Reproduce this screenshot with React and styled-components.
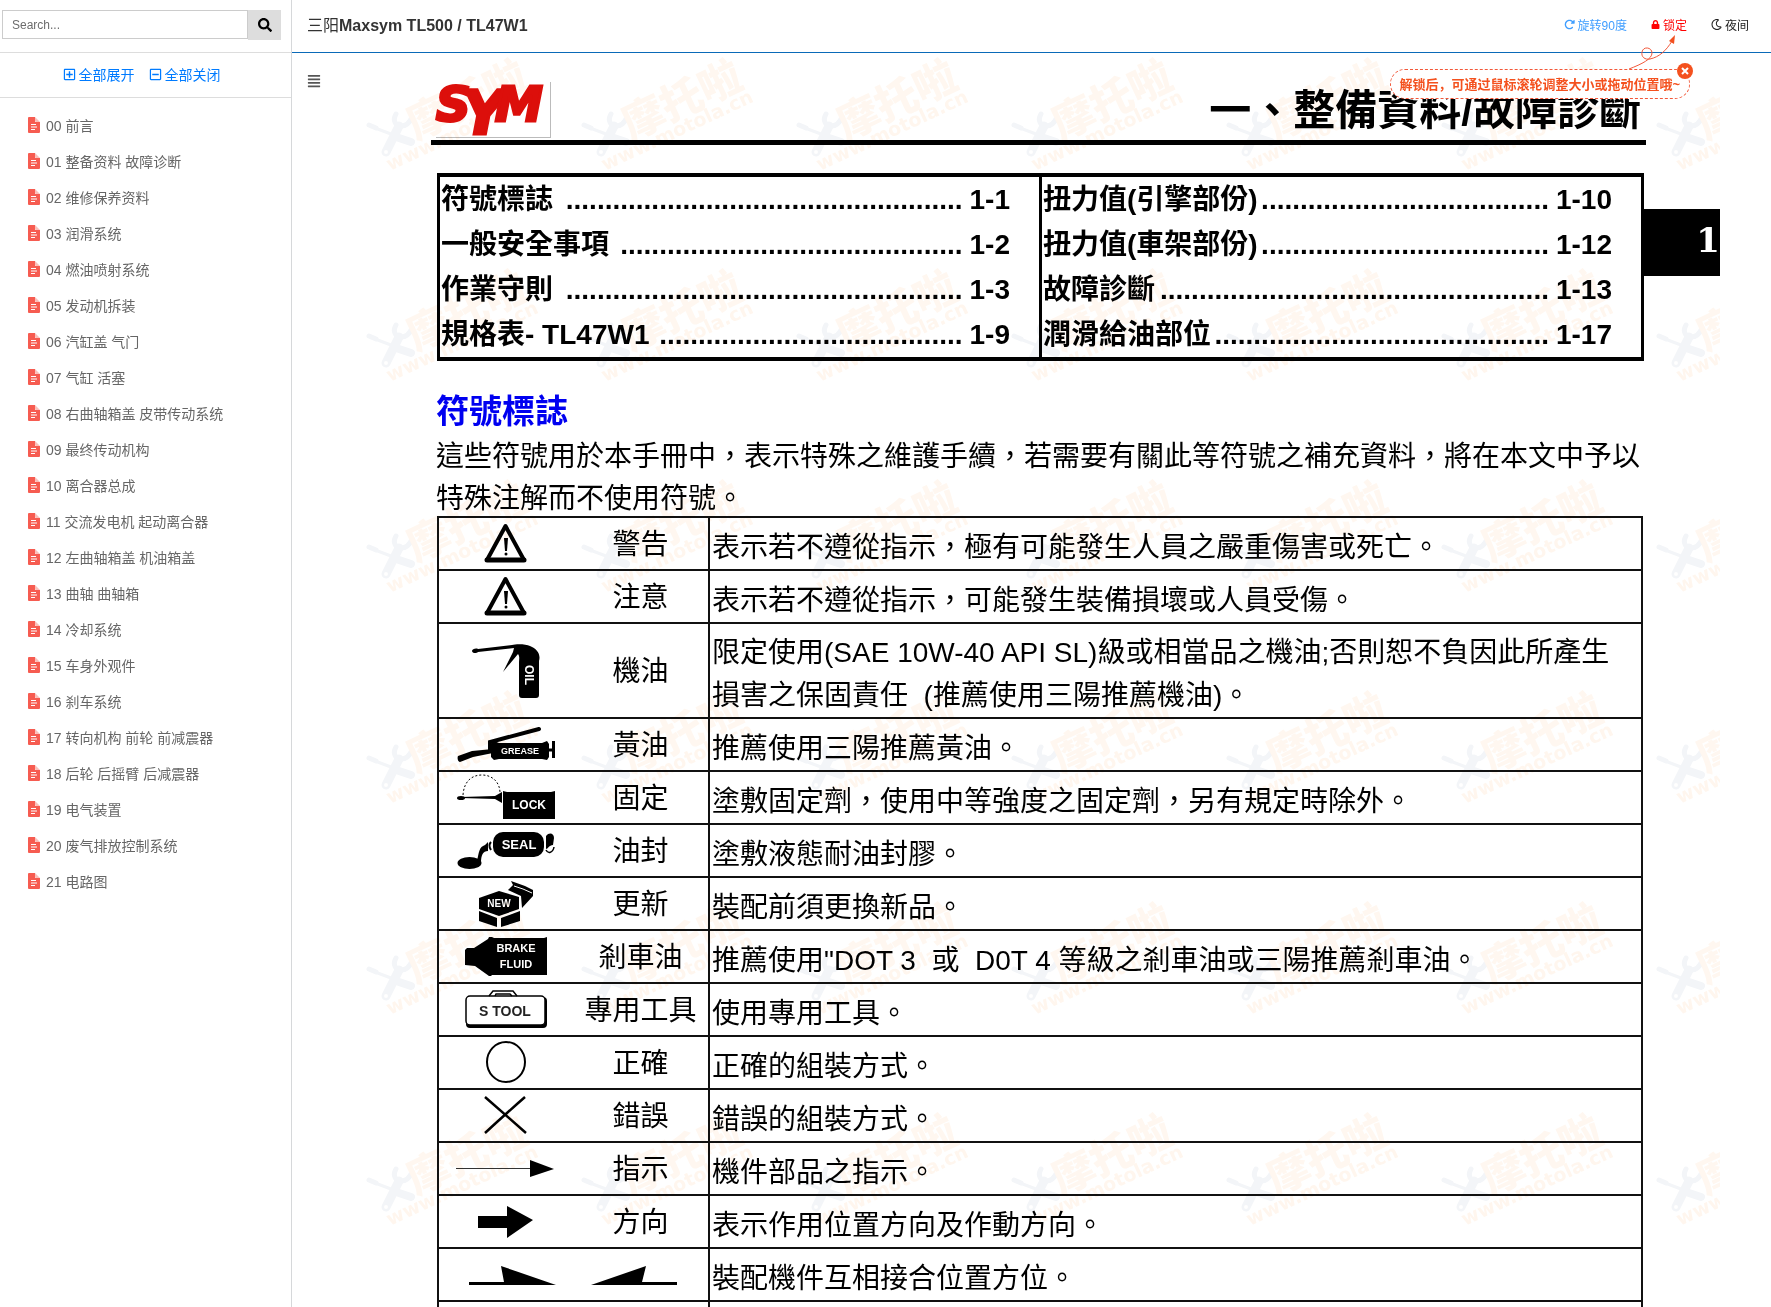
import { useState } from "react";
import styled, { createGlobalStyle } from "styled-components";
import {
  FaSearch,
  FaRegPlusSquare,
  FaRegMinusSquare,
  FaLock,
  FaRegMoon,
  FaAlignJustify,
} from "react-icons/fa";
import { FaRotateRight } from "react-icons/fa6";

const chapters = [
  "00 前言",
  "01 整备资料 故障诊断",
  "02 维修保养资料",
  "03 润滑系统",
  "04 燃油喷射系统",
  "05 发动机拆装",
  "06 汽缸盖 气门",
  "07 气缸 活塞",
  "08 右曲轴箱盖 皮带传动系统",
  "09 最终传动机构",
  "10 离合器总成",
  "11 交流发电机 起动离合器",
  "12 左曲轴箱盖 机油箱盖",
  "13 曲轴 曲轴箱",
  "14 冷却系统",
  "15 车身外观件",
  "16 刹车系统",
  "17 转向机构 前轮 前减震器",
  "18 后轮 后摇臂 后减震器",
  "19 电气装置",
  "20 废气排放控制系统",
  "21 电路图",
];

const tocLeft = [
  { label: "符號標誌", dots: 51, page: "1-1" },
  { label: "一般安全事項", dots: 44, page: "1-2" },
  { label: "作業守則", dots: 51, page: "1-3" },
  { label: "規格表- TL47W1", dots: 39, page: "1-9" },
];

const tocRight = [
  { label: "扭力值(引擎部份)", dots: 37, page: "1-10" },
  { label: "扭力值(車架部份)", dots: 37, page: "1-12" },
  { label: "故障診斷", dots: 50, page: "1-13" },
  { label: "潤滑給油部位", dots: 43, page: "1-17" },
];

const FileIcon = () => (
  <svg width="12" height="16" viewBox="0 0 12 16" aria-hidden="true">
    <path d="M1 0h6v5h5v10a1 1 0 0 1-1 1H1a1 1 0 0 1-1-1V1a1 1 0 0 1 1-1z" fill="#f65c51" />
    <path d="M7 0l5 5H8a1 1 0 0 1-1-1z" fill="#fac0bb" />
    <path d="M3 7.500h5M3 10h6M3 12.500h4" stroke="#fff" strokeWidth="1" />
  </svg>
);

const SymLogo = () => (
  <LogoSvg width="112" height="54" viewBox="0 0 112 54" role="img" aria-label="SYM">
    <text
      fill="#dc0f0b"
      stroke="#dc0f0b"
      strokeWidth="3"
      fontFamily="DejaVu Sans, sans-serif"
      fontWeight="700"
      fontStyle="italic"
      fontSize="48"
    >
      <tspan x="0" y="39">S</tspan>
      <tspan x="26" y="52" fontSize="60">Y</tspan>
      <tspan x="59" y="39">M</tspan>
    </text>
  </LogoSvg>
);

const Warning = () => (
  <Drawing viewBox="0 0 104 51">
    <path d="M52.500 8L71 42H34z" fill="none" stroke="#000" strokeWidth="4" strokeLinejoin="round" />
    <path d="M34 42h37" stroke="#000" strokeWidth="5" strokeLinecap="round" />
    <path d="M51 20h4l-1 13h-2z" />
    <circle cx="53" cy="36" r="1.500" />
  </Drawing>
);

const Oil = () => (
  <Drawing $tall viewBox="0 0 104 93">
    <path d="M66 38c0-3 1-5-1-8L50 48l10-20 1-4-36 4c-2 2-6 1-6-1s4-3 6-2l34-4c4-1 14-1 18 1 7 3 11 8 9 15v34c0 2-1 3-3 3H69c-2 0-3-1-3-3z" />
    <text x="41" y="-72" transform="rotate(90)" fontSize="12">OIL</text>
  </Drawing>
);

const Grease = () => (
  <Drawing viewBox="0 0 104 51">
    <path d="M37 32v-9L86 10" fill="none" stroke="#000" strokeWidth="4" strokeLinecap="round" />
    <path d="M5 37l14-5 21-2v4l-20 4-13 5c-2 0-3-4-2-6z" />
    <path d="M38 25l3-3 5 2h43l5-2 2 3v13l-2 3-5-1H46l-5 1-3-3z" />
    <path d="M95 31h5M100.500 22v17" stroke="#000" strokeWidth="3" />
    <text x="67" y="35" fontSize="9" textAnchor="middle">GREASE</text>
  </Drawing>
);

const Lock = () => (
  <Drawing viewBox="0 0 104 51">
    <path d="M10 23C11 9 19 3 29 3s18 7 18 18" fill="none" stroke="#000" strokeDasharray="2 2" />
    <ellipse cx="8" cy="26" rx="4" ry="2" />
    <path d="M8 25l34-1 7-4v11l-7-4-34-1z" />
    <path d="M50 19l4 1h44l4-1v28H50z" />
    <text x="76" y="37" fontSize="12" textAnchor="middle">LOCK</text>
  </Drawing>
);

const Seal = () => (
  <Drawing viewBox="0 0 104 51">
    <ellipse cx="16.500" cy="38" rx="12" ry="6" />
    <path d="M24 36c2-9 2-14 8-16l3-3v9c-5 0-7 4-7 12z" />
    <path d="M38 17c-2 2-2 5 0 8" fill="none" stroke="#000" strokeWidth="2" />
    <rect x="40" y="7" width="51" height="25" rx="10" />
    <path d="M93 11c3-4 8-3 8 2l-1 7c-4 0-5 4-7 4z" />
    <path d="M93 25c2 4 7 3 8-3" fill="none" stroke="#000" strokeWidth="1.500" />
    <text x="66" y="24" fontSize="13" textAnchor="middle">SEAL</text>
  </Drawing>
);

const Renew = () => (
  <Drawing viewBox="0 0 104 51">
    <path d="M26 20l20-7 20 6v12l-20 7-20-7z" />
    <path d="M26 33l18 7v9l-18-6zM48 40l19-7v10l-19 6z" />
    <path d="M55 12l5-5-2-4 14 5 8 4v6L69 30l-1-12z" />
    <path d="M61 8l9 3 9 4" fill="none" stroke="#fff" strokeWidth="1" />
    <text x="46" y="29" fontSize="10" textAnchor="middle">NEW</text>
  </Drawing>
);

const BrakeFluid = () => (
  <Drawing viewBox="0 0 104 51">
    <path d="M12 19l2-2h7l14-9 1-2h3l2 1h50l3-1v38H39l-1 1h-2L22 35l-10-1z" />
    <text x="63" y="21" fontSize="11" textAnchor="middle">BRAKE</text>
    <text x="63" y="37" fontSize="11" textAnchor="middle">FLUID</text>
  </Drawing>
);

const SpecialTool = () => (
  <Drawing viewBox="0 0 104 51">
    <rect x="13" y="13" width="81" height="31" rx="4" />
    <rect x="13" y="12" width="79" height="29" rx="4" fill="#fff" stroke="#000" strokeWidth="1.500" />
    <path d="M36 12l4-5h20l4 5M42 12l1-2h14l2 2" fill="none" stroke="#000" strokeWidth="1.500" />
    <DarkText x="52" y="32" fontSize="14" textAnchor="middle">S TOOL</DarkText>
  </Drawing>
);

const Correct = () => (
  <Drawing viewBox="0 0 104 51">
    <ellipse cx="53" cy="25" rx="19" ry="20" fill="none" stroke="#000" strokeWidth="2" />
  </Drawing>
);

const Wrong = () => (
  <Drawing viewBox="0 0 104 51">
    <path d="M32 7l41 36M72 7C56 21 45 31 32 43" fill="none" stroke="#000" strokeWidth="2.500" />
  </Drawing>
);

const Pointer = () => (
  <Drawing viewBox="0 0 104 51">
    <path d="M3 25.500h76" stroke="#333" />
    <path d="M77 17l24 9-24 8z" />
  </Drawing>
);

const Direction = () => (
  <Drawing viewBox="0 0 104 51">
    <path d="M25 20h29V10l26 14-26 18V32H25z" />
  </Drawing>
);

const Matching = () => (
  <Drawing $wide viewBox="0 0 269 51">
    <path d="M30 33h35l-3-16 55 19H30z" />
    <path d="M238 33h-35l4-16-55 19h86z" />
  </Drawing>
);

const symbols = [
  { icon: <Warning />, name: "警告", text: "表示若不遵從指示，極有可能發生人員之嚴重傷害或死亡。" },
  { icon: <Warning />, name: "注意", text: "表示若不遵從指示，可能發生裝備損壞或人員受傷。" },
  {
    icon: <Oil />,
    name: "機油",
    text: "限定使用(SAE 10W-40 API SL)級或相當品之機油;否則恕不負因此所產生\n損害之保固責任  (推薦使用三陽推薦機油)。",
  },
  { icon: <Grease />, name: "黃油", text: "推薦使用三陽推薦黃油。" },
  { icon: <Lock />, name: "固定", text: "塗敷固定劑，使用中等強度之固定劑，另有規定時除外。" },
  { icon: <Seal />, name: "油封", text: "塗敷液態耐油封膠。" },
  { icon: <Renew />, name: "更新", text: "裝配前須更換新品。" },
  { icon: <BrakeFluid />, name: "剎車油", text: "推薦使用\"DOT 3  或  D0T 4 等級之剎車油或三陽推薦剎車油。" },
  { icon: <SpecialTool />, name: "專用工具", text: "使用專用工具。" },
  { icon: <Correct />, name: "正確", text: "正確的組裝方式。" },
  { icon: <Wrong />, name: "錯誤", text: "錯誤的組裝方式。" },
  { icon: <Pointer />, name: "指示", text: "機件部品之指示。" },
  { icon: <Direction />, name: "方向", text: "表示作用位置方向及作動方向。" },
  { icon: <Matching />, text: "裝配機件互相接合位置方位。" },
];

const Watermark = () => (
  <WatermarkLayer aria-hidden="true">
    <defs>
      <pattern id="watermark" width="215" height="211" patternUnits="userSpaceOnUse">
        <g fill="none" stroke="#f3f5f8" strokeLinecap="round">
          <path d="M38 73L25 99" strokeWidth="9" />
          <path d="M35 61c-4 7 0 12 5 12s9-4 11-9" strokeWidth="5" />
          <path d="M8 72l7 3" strokeWidth="5" />
          <path d="M14 75l16 6" strokeWidth="3" />
          <path d="M38 85l12 4" strokeWidth="8" />
        </g>
        <circle cx="25" cy="99" r="2" fill="#fff" />
        <text
          transform="translate(55 87) rotate(-25)"
          fill="#fff7f0"
          fontFamily="Noto Sans CJK SC, sans-serif"
          fontWeight="900"
          fontSize="42"
        >
          摩托啦
        </text>
        <text
          transform="translate(29 118) rotate(-25)"
          fill="#fff6ee"
          fontFamily="DejaVu Sans, sans-serif"
          fontWeight="700"
          fontSize="19"
        >
          www.motola.cn
        </text>
      </pattern>
    </defs>
    <rect width="100%" height="100%" fill="url(#watermark)" />
  </WatermarkLayer>
);

const TocList = ({ items }) => (
  <TocColumn>
    {items.map(({ label, dots, page }) => (
      <TocRow key={page}>
        <span>{label}</span>
        <TocDots>{".".repeat(dots)}</TocDots>
        <span>{page}</span>
      </TocRow>
    ))}
  </TocColumn>
);

const App = () => {
  const [tipOpen, setTipOpen] = useState(true);

  return (
    <Layout>
      <GlobalStyle />
      <Sidebar>
        <SearchBar onSubmit={(e) => e.preventDefault()}>
          <SearchInput type="text" placeholder="Search..." aria-label="Search" />
          <SearchButton type="submit" aria-label="Search">
            <FaSearch />
          </SearchButton>
        </SearchBar>
        <TreeActions>
          <TreeLink href="#open">
            <FaRegPlusSquare size={13} />
            全部展开
          </TreeLink>
          <TreeLink href="#close">
            <FaRegMinusSquare size={13} />
            全部关闭
          </TreeLink>
        </TreeActions>
        <ChapterList>
          {chapters.map((chapter) => (
            <li key={chapter}>
              <ChapterLink href="#chapter">
                <FileIcon />
                {chapter}
              </ChapterLink>
            </li>
          ))}
        </ChapterList>
      </Sidebar>

      <Main>
        <TopBar>
          <Title>
            <span>三阳</span>Maxsym TL500 / TL47W1
          </Title>
          <Tools>
            <ToolButton type="button" $color="#409eff">
              <FaRotateRight size={11} />
              旋转90度
            </ToolButton>
            <ToolButton type="button" $color="#f00">
              <FaLock size={9} />
              锁定
            </ToolButton>
            <ToolButton type="button" $color="#222">
              <FaRegMoon size={11} />
              夜间
            </ToolButton>
          </Tools>
        </TopBar>

        {tipOpen && (
          <Tip>
            解锁后，可通过鼠标滚轮调整大小或拖动位置哦~
            <TipArrow viewBox="0 0 55 37" aria-hidden="true">
              <path
                d="M4 36C17 31 27 26 27 20c0-6-9-7-10-1-1 5 3 8 8 7 9-2 16-8 22-18"
                fill="none"
                stroke="#f2583a"
                strokeWidth="1"
              />
              <path d="M50 2l-6 6 5 3z" fill="#f2501f" />
            </TipArrow>
            <TipClose type="button" aria-label="关闭" onClick={() => setTipOpen(false)}>
              <svg width="8" height="8" viewBox="0 0 8 8">
                <path d="M1 1l6 6M7 1L1 7" stroke="#fff" strokeWidth="2" />
              </svg>
            </TipClose>
          </Tip>
        )}

        <Reader>
          <MenuButton type="button" aria-label="目录">
            <FaAlignJustify />
          </MenuButton>
          <Sheet>
            <SheetHead>
              <LogoBox>
                <SymLogo />
              </LogoBox>
              <SheetTitle>一、整備資料/故障診斷</SheetTitle>
            </SheetHead>
            <TocArea>
              <Toc>
                <TocList items={tocLeft} />
                <TocList items={tocRight} />
              </Toc>
              <ChapterTab>1</ChapterTab>
            </TocArea>
            <Section>
              <SectionTitle>符號標誌</SectionTitle>
              <Intro>
                這些符號用於本手冊中，表示特殊之維護手續，若需要有關此等符號之補充資料，將在本文中予以
                特殊注解而不使用符號。
              </Intro>
              <SymbolTable>
                <colgroup>
                  <col width="135" />
                  <col width="136" />
                  <col />
                </colgroup>
                <tbody>
                  {symbols.map(({ icon, name, text }) => (
                    <tr key={text}>
                      <IconCell colSpan={name ? 1 : 2}>{icon}</IconCell>
                      {name && <NameCell>{name}</NameCell>}
                      <TextCell>{text}</TextCell>
                    </tr>
                  ))}
                  <tr>
                    <IconCell />
                    <NameCell />
                    <TextCell />
                  </tr>
                </tbody>
              </SymbolTable>
            </Section>
            <Watermark />
          </Sheet>
        </Reader>
      </Main>
    </Layout>
  );
};

const GlobalStyle = createGlobalStyle`
  * {
    box-sizing: border-box;
  }
  body {
    margin: 0;
    background: #fff;
    font-family: "Liberation Sans", "Noto Sans CJK SC", sans-serif;
    font-size: 14px;
    color: #666;
  }
  ul, h1, h2, p {
    margin: 0;
    padding: 0;
    list-style: none;
  }
  a {
    text-decoration: none;
  }
  button {
    border: 0;
    padding: 0;
    background: none;
    font: inherit;
    cursor: pointer;
  }
`;

const Layout = styled.div`
  display: flex;
  height: 100vh;
  overflow: hidden;
`;

const Sidebar = styled.aside`
  flex: none;
  width: 292px;
  border-right: 1px solid #d6d8da;
`;

const SearchBar = styled.form`
  display: flex;
  align-items: flex-start;
  height: 53px;
  padding: 10px 10px 0 2px;
  border-bottom: 1px solid #ddd;
`;

const SearchInput = styled.input`
  flex: 1;
  min-width: 0;
  height: 29px;
  padding: 0 9px;
  border: 1px solid #ccc;
  font: 12px "Liberation Sans", sans-serif;
  outline: none;
  &::placeholder {
    color: #6c6c6c;
  }
`;

const SearchButton = styled.button`
  display: flex;
  align-items: center;
  justify-content: center;
  width: 33px;
  height: 30px;
  background: #ddd;
  color: #000;
`;

const TreeActions = styled.div`
  display: flex;
  align-items: center;
  justify-content: center;
  gap: 14px;
  height: 45px;
  padding: 0 8px 2px 0;
  border-bottom: 1px solid #ddd;
`;

const TreeLink = styled.a`
  display: flex;
  align-items: center;
  gap: 3px;
  color: #007bff;
`;

const ChapterList = styled.ul`
  padding-top: 9px;
`;

const ChapterLink = styled.a`
  display: flex;
  align-items: center;
  gap: 6px;
  height: 36px;
  padding-left: 28px;
  color: #666;
`;

const Main = styled.main`
  position: relative;
  flex: 1;
  min-width: 0;
`;

const TopBar = styled.header`
  display: flex;
  align-items: center;
  justify-content: space-between;
  height: 53px;
  padding: 0 22px 4px 15px;
  border-bottom: 1px solid #0a6ab8;
`;

const Title = styled.h1`
  font-size: 16px;
  font-weight: 700;
  color: #333;
  span {
    font-weight: 400;
  }
`;

const Tools = styled.div`
  display: flex;
  gap: 24px;
`;

const ToolButton = styled.button`
  display: flex;
  align-items: center;
  gap: 3px;
  font-size: 12px;
  color: ${({ $color }) => $color};
`;

/* hint bubble hanging below the lock button */
const Tip = styled.div`
  position: absolute;
  top: 69px;
  right: 81px;
  z-index: 2;
  height: 30px;
  padding: 0 9px 0 8px;
  border: 1px dashed #f2583a;
  border-radius: 15px;
  background: #fff;
  font-size: 13px;
  font-weight: 700;
  line-height: 30px;
  white-space: nowrap;
  color: #f4511e;
`;

const TipArrow = styled.svg`
  position: absolute;
  right: 9px;
  bottom: 28px;
  width: 55px;
  height: 37px;
`;

const TipClose = styled.button`
  position: absolute;
  top: -7px;
  right: -4px;
  display: flex;
  align-items: center;
  justify-content: center;
  width: 16px;
  height: 16px;
  border-radius: 50%;
  background: #f4511e;
`;

const Reader = styled.div`
  display: flex;
  align-items: flex-start;
  gap: 40px;
  padding: 0 51px 0 15px;
`;

const MenuButton = styled.button`
  display: flex;
  margin-top: 21px;
  font-size: 14px;
  color: #555;
`;

const Sheet = styled.article`
  position: relative;
  flex: 1;
  min-width: 0;
  overflow: hidden;
  padding-left: 70px;
  font-family: "Liberation Sans", "Noto Sans CJK TC", sans-serif;
  font-size: 28px;
  color: #000;
`;

const WatermarkLayer = styled.svg`
  position: absolute;
  inset: 0;
  width: 100%;
  height: 100%;
  mix-blend-mode: multiply;
  pointer-events: none;
`;

const SheetHead = styled.header`
  display: flex;
  align-items: flex-end;
  justify-content: space-between;
  height: 92px;
  margin-right: 74px;
  padding: 0 5px;
  border-bottom: 5px solid #000;
`;

const LogoBox = styled.div`
  height: 56px;
  margin-bottom: 2px;
  padding-right: 2px;
  border: solid #bbb;
  border-width: 0 1px 1px 0;
`;

const LogoSvg = styled.svg`
  display: block;
  overflow: visible;
`;

const SheetTitle = styled.h1`
  font-size: 42px;
  line-height: 58px;
`;

const TocArea = styled.div`
  display: grid;
  grid-template-columns: 1fr 76px;
  align-items: start;
  margin-top: 28px;
  padding-left: 6px;
`;

const Toc = styled.div`
  display: flex;
  border: solid #000;
  border-width: 4px 3px;
  font-weight: 700;
`;

const TocColumn = styled.ul`
  flex: 1;
  min-width: 0;
  padding: 0 29px 0 1px;
  & + & {
    border-left: 3px solid #000;
  }
`;

const TocRow = styled.li`
  display: flex;
  height: 45px;
  line-height: 45px;
  white-space: pre;
`;

const TocDots = styled.span`
  flex: 1;
  padding-right: 7px;
  text-align: right;
`;

const ChapterTab = styled.div`
  height: 67px;
  margin-top: 36px;
  background: #000;
  font-family: "DejaVu Serif", serif;
  font-size: 34px;
  font-weight: 700;
  line-height: 63px;
  text-align: right;
  color: #fff;
`;

const Section = styled.section`
  margin-right: 76px;
  padding-left: 5px;
`;

const SectionTitle = styled.h2`
  margin-top: 29px;
  font-size: 33px;
  line-height: 44px;
  color: #0000f0;
`;

const Intro = styled.p`
  margin: 2px 0 -4px;
  line-height: 42px;
`;

const SymbolTable = styled.table`
  width: calc(100% - 2px);
  margin-left: 1px;
  border-collapse: collapse;
  table-layout: fixed;
  border: 2px solid #111;
  tr {
    height: 53px;
    border-top: 2px solid #111;
  }
`;

const IconCell = styled.td`
  padding: 0 2px 0 0;
`;

const NameCell = styled.td`
  padding: 2px 0 0;
  line-height: 40px;
  text-align: center;
`;

const TextCell = styled.td`
  padding: 7px 0 0 2px;
  border-left: 2px solid #111;
  line-height: 43px;
  vertical-align: bottom;
  white-space: pre-wrap;
`;

const Drawing = styled.svg`
  display: block;
  width: ${({ $wide }) => ($wide ? 269 : 104)}px;
  height: ${({ $tall }) => ($tall ? 93 : 51)}px;
  margin: 0 auto;
  text {
    fill: #fff;
    font-family: "Liberation Sans", sans-serif;
    font-weight: 700;
  }
`;

const DarkText = styled.text`
  && {
    fill: #222;
  }
`;

export default App;
